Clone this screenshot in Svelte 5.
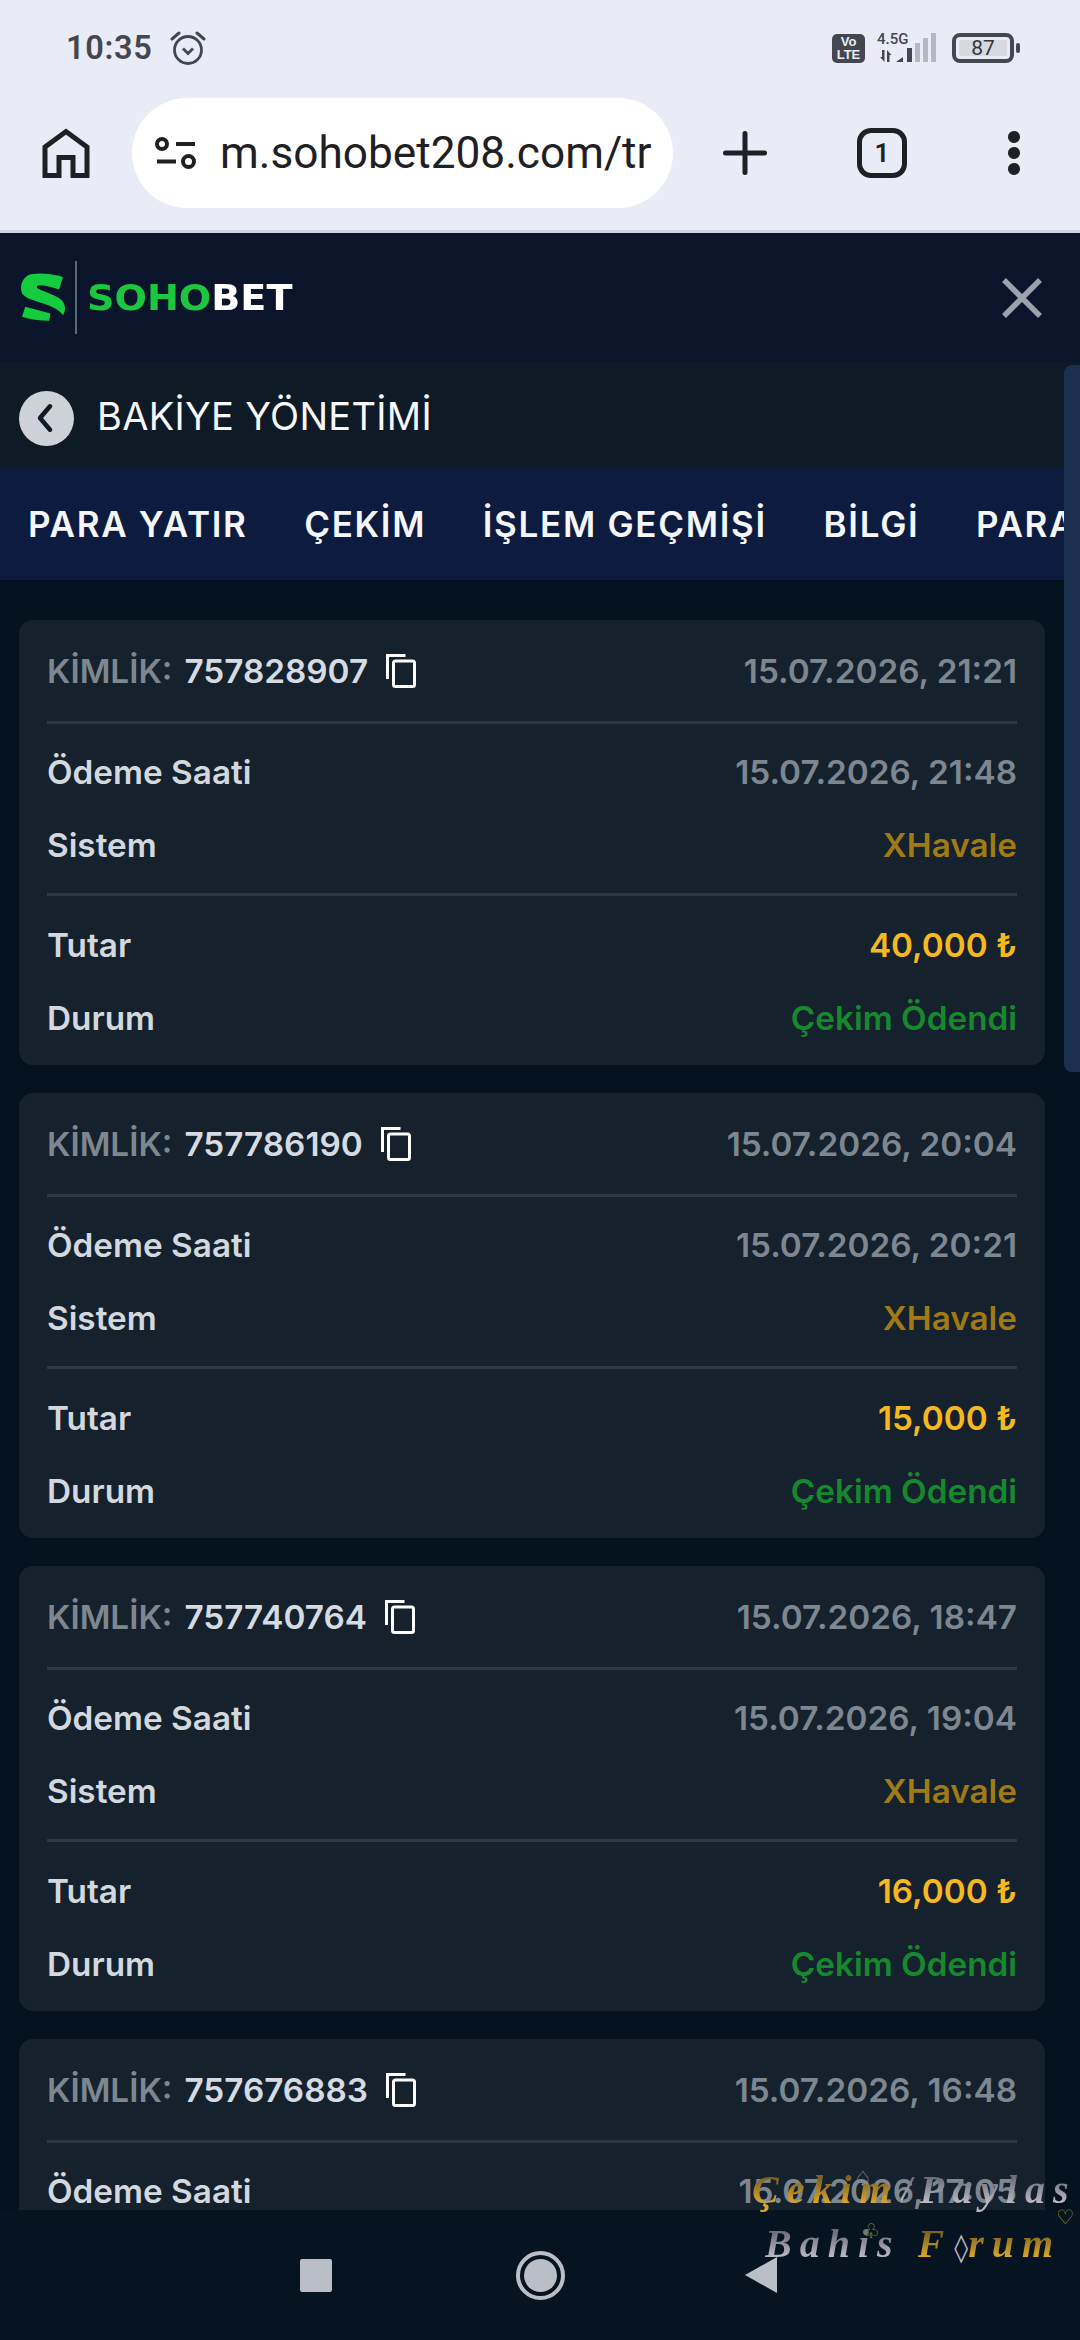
<script>
  const cards = [
    { id: '757828907', date: '15.07.2026, 21:21', pay: '15.07.2026, 21:48', amount: '40,000 ₺' },
    { id: '757786190', date: '15.07.2026, 20:04', pay: '15.07.2026, 20:21', amount: '15,000 ₺' },
    { id: '757740764', date: '15.07.2026, 18:47', pay: '15.07.2026, 19:04', amount: '16,000 ₺' },
    { id: '757676883', date: '15.07.2026, 16:48', pay: '15.07.2026, 17:05', amount: '' }
  ];
  const tabs = ['PARA YATIR', 'ÇEKİM', 'İŞLEM GEÇMİŞİ', 'BİLGİ', 'PARA'];
</script>

<div class="page">
  <div class="status">
    <div class="st-left">
      <span class="time">10:35</span>
      <svg class="alarm" viewBox="0 0 36 36" width="36" height="36" fill="none" stroke="#44474f" stroke-width="2.8">
        <circle cx="18" cy="20" r="13.500" />
        <path d="M13 18.500l5 5 5-5" />
        <path d="M2 9l7-6M34 9l-7-6" stroke-linecap="round" stroke-width="3" />
      </svg>
    </div>
    <div class="st-right">
      <div class="volte"><span>Vo</span><span>LTE</span></div>
      <div class="net">
        <div class="g">4.5G</div>
        <svg viewBox="0 0 60 30" width="60" height="30" class="bars">
          <path d="M5 17h2.500v12L3 24h2zM10 29V17l4.500 5h-2v7z" fill="#44474f" />
          <path d="M19 29l7-5v5z" fill="#44474f" />
          <rect x="30" y="15" width="5" height="14" fill="#44474f" />
          <rect x="38" y="10" width="5" height="19" fill="#b5b8c2" />
          <rect x="46" y="5" width="5" height="24" fill="#b5b8c2" />
          <rect x="54" y="0" width="5" height="29" fill="#b5b8c2" />
        </svg>
      </div>
      <div class="batt"><div class="batt-in">87</div></div>
      <div class="nub"></div>
    </div>
  </div>

  <div class="toolbar">
    <svg class="home" viewBox="0 0 48 50" width="48" height="50" fill="none" stroke="#1f2024" stroke-width="5">
      <path d="M3 47.500V19L24 3.500 45 19v28.500H31V29.500H17v18z" />
    </svg>
    <div class="url">
      <svg viewBox="0 0 42 32" width="42" height="32" fill="none" stroke="#1f2024" stroke-width="4">
        <circle cx="7" cy="7" r="5" />
        <path d="M21 7h19M2 24.500h19" />
        <circle cx="33.500" cy="24.500" r="5.500" />
      </svg>
      <span class="url-text">m.sohobet208.com/tr</span>
    </div>
    <svg class="plus" viewBox="0 0 44 44" width="44" height="44" stroke="#1f2024" stroke-width="5" stroke-linecap="round">
      <path d="M22 2.500v39M2.500 22h39" />
    </svg>
    <div class="tabcount">1</div>
    <div class="dots"><i></i><i></i><i></i></div>
  </div>
  <div class="sep"></div>

  <header class="head">
    <div class="logo">
      <svg viewBox="30 48 142 148" width="47" height="49" fill="#15cb3e">
        <path d="M62 52C90 46 130 50 160 60L148 98C125 90 105 85 90 85C82 85 78 90 84 95C100 104 130 112 150 125C165 136 172 155 160 176C150 160 130 150 100 140C75 132 50 125 38 112C28 98 32 62 62 52Z" />
        <path d="M46 150L122 170L118 192C90 192 60 188 36 180Z" />
      </svg>
      <div class="logo-div"></div>
      <div class="logo-text"><span class="soho">SOHO</span><span>BET</span></div>
    </div>
    <svg class="close" viewBox="0 0 40 40" width="40" height="40" stroke="#9ba1ad" stroke-width="5.500">
      <path d="M2 2l36 36M38 2L2 38" />
    </svg>
  </header>

  <div class="title">
    <div class="back">
      <svg viewBox="0 0 24 36" width="20" height="30" fill="none" stroke="#101a25" stroke-width="5.500" stroke-linecap="round" stroke-linejoin="round">
        <path d="M18 4L6 18l12 14" />
      </svg>
    </div>
    <span class="title-text">BAKİYE YÖNETİMİ</span>
  </div>

  <nav class="tabs">
    {#each tabs as t}<span class="tab">{t}</span>{/each}
  </nav>

  <main class="list">
    {#each cards as c}
      <section class="card">
        <div class="row top">
          <div class="idline">
            <span class="lbl-id">KİMLİK:</span>
            <span class="idv">{c.id}</span>
            <svg viewBox="0 0 30 34" width="30" height="34" fill="none" stroke="#fff" stroke-width="3">
              <path d="M1.500 25V1.500h18" />
              <rect x="7.500" y="7" width="21" height="25.500" rx="2" />
            </svg>
          </div>
          <span class="muted">{c.date}</span>
        </div>
        <hr />
        <div class="row"><span class="lbl">Ödeme Saati</span><span class="muted">{c.pay}</span></div>
        <div class="row"><span class="lbl">Sistem</span><span class="sys">XHavale</span></div>
        <hr />
        <div class="row"><span class="lbl">Tutar</span><span class="amt">{c.amount}</span></div>
        <div class="row"><span class="lbl">Durum</span><span class="ok">Çekim Ödendi</span></div>
      </section>
    {/each}
  </main>

  <footer class="nav">
    <div class="sq"></div>
    <div class="circ"><div></div></div>
    <svg viewBox="0 0 32 36" width="32" height="36"><path d="M32 0v36L0 18z" fill="#b9bec7" /></svg>
  </footer>

  <div class="scroll"></div>
  <div class="wm">
    <div class="wm1"><span class="au">Çekim</span><span class="ag">/Paylas</span></div>
    <div class="wm2"><span class="ag">Bahis</span> <span class="au">F</span><span class="dia">◊</span><span class="au">rum</span></div>
    <span class="suit spade">♤</span>
    <span class="suit club">♧</span>
    <span class="suit heart">♡</span>
  </div>
</div>

<style>
  :global(body) { margin: 0; background: #061320; }
  .page {
    position: relative; width: 1080px; height: 2340px; overflow: hidden;
    display: flex; flex-direction: column; font-family: Inter, "Noto Sans", sans-serif;
  }
  .status {
    height: 90px; flex: none; background: #e9ecf7; display: flex; justify-content: space-between;
    align-items: center; padding: 6px 60px 0 66px; box-sizing: border-box;
  }
  .st-left { display: flex; align-items: center; gap: 17px; }
  .time { font: 600 32.500px Roboto, sans-serif; color: #44474f; letter-spacing: .7px; }
  .st-right { display: flex; align-items: center; }
  .volte {
    width: 33px; height: 29px; background: #44474f; border-radius: 5px; color: #e9ecf7;
    font: 700 13px/13px "Liberation Sans", sans-serif; display: flex; flex-direction: column; align-items: center; justify-content: center;
  }
  .net { width: 60px; height: 30px; margin-left: 12px; position: relative; }
  .g { position: absolute; left: 0; top: -3px; font: 500 15px/18px Roboto, sans-serif; color: #44474f; }
  .bars { position: absolute; left: 0; top: 0; }
  .batt {
    width: 62px; height: 30px; box-sizing: border-box; border: 4px solid #44474f; border-radius: 8px;
    margin-left: 15px; padding: 3px 3px; display: flex;
  }
  .batt-in { flex: 1; background: #d6d9e0; border-radius: 2px; text-align: center; font: 400 21px/16px Roboto, sans-serif; color: #33353b; }
  .nub { width: 4px; height: 10px; background: #44474f; border-radius: 2px; margin-left: 2px; }

  .toolbar { height: 140px; flex: none; background: #e9ecf7; display: flex; align-items: center; padding-bottom: 14px; box-sizing: border-box; }
  .home { margin-left: 42px; flex: none; }
  .url {
    margin-left: 42px; width: 541px; height: 110px; background: #fff; border-radius: 55px;
    display: flex; align-items: center; gap: 23px; padding-left: 23px; box-sizing: border-box; overflow: hidden; flex: none;
  }
  .url svg { flex: none; }
  .url-text { font: 400 44.200px Roboto, sans-serif; color: #1f2024; white-space: nowrap; }
  .plus { margin-left: 50px; flex: none; }
  .tabcount {
    margin-left: 90px; width: 50px; height: 50px; box-sizing: border-box; border: 5px solid #1f2024; border-radius: 14px;
    font: 600 26px/40px Roboto, sans-serif; color: #1f2024; text-align: center; flex: none;
  }
  .dots { margin-left: 101px; display: flex; flex-direction: column; gap: 4.500px; flex: none; }
  .dots i { width: 11.500px; height: 11.500px; border-radius: 50%; background: #1f2024; display: block; }
  .sep { height: 3px; flex: none; background: #d0d4e0; }

  .head { height: 129px; flex: none; background: #0a142a; display: flex; align-items: center; justify-content: space-between; padding: 0 38px 0 20px; box-sizing: border-box; }
  .logo { display: flex; align-items: center; }
  .logo-div { width: 1.500px; height: 73px; background: #5d6779; margin-left: 8px; margin-right: 10px; }
  .logo-text { font: 700 35px "DejaVu Sans", sans-serif; color: #fff; transform: scaleX(1.09); transform-origin: left center; white-space: nowrap; }
  .soho { color: #1cc63f; }
  .close { flex: none; margin-top: 1px; }

  .title { height: 106px; flex: none; background: #0e1a26; display: flex; align-items: center; gap: 24px; padding: 6px 0 0 19px; color: #f6f8fa; font-size: 38px; font-weight: 400; letter-spacing: .3px; box-sizing: border-box; }
  .title-text { margin: -5px 0 0 -1px; }
  .back { width: 55px; height: 55px; border-radius: 50%; background: #ced2d8; display: flex; align-items: center; justify-content: center; flex: none; }
  .back svg { margin-left: -3px; }

  .tabs { height: 112px; flex: none; background: #0d1b3f; display: flex; align-items: center; gap: 56.500px; padding-left: 28px; overflow: hidden; white-space: nowrap; }
  .tab { color: #f4f6fa; font-size: 35px; font-weight: 600; letter-spacing: 1.700px; flex: none; }

  .list { flex: 1; min-height: 0; overflow: hidden; background: #04121f; padding: 40px 35px 0 19px; display: flex; flex-direction: column; gap: 28px; }
  .card { flex: none; background: #15212d; border-radius: 14px; padding: 0 28px; height: 445px; box-sizing: border-box; }
  .row { display: flex; justify-content: space-between; align-items: center; height: 73px; font-size: 33.300px; font-weight: 600; white-space: nowrap; }
  .row.top { height: 101px; }
  hr { margin: 12px 0; border: 0; height: 3px; background: #2c3741; }
  .row.top + hr { margin: 0 0 11px; }
  .idline { display: flex; align-items: center; }
  .lbl-id { color: #7d8790; }
  .idv { color: #d6dbe2; margin-left: 12px; }
  .idline svg { margin-left: 18px; }
  .lbl { color: #d3d8df; }
  .muted { color: #7d8790; }
  .sys { color: #a07a14; }
  .amt { color: #f5b81f; }
  .ok { color: #16892d; }

  .nav { height: 130px; flex: none; background: #061320; display: flex; align-items: center; padding-left: 300px; box-sizing: border-box; }
  .sq { width: 32px; height: 33px; background: #b9bec7; border-radius: 2px; }
  .circ { width: 49px; height: 49px; border: 4px solid #b9bec7; border-radius: 50%; margin-left: 184px; padding: 4px; box-sizing: border-box; flex: none; }
  .circ div { width: 100%; height: 100%; background: #b9bec7; border-radius: 50%; }
  .nav svg { margin-left: 180px; flex: none; }

  .scroll { position: absolute; right: 0; top: 365px; width: 16px; height: 707px; background: #1b2f4f; border-radius: 8px 0 0 8px; }
  .wm { position: absolute; left: 752px; top: 2163px; font: italic 700 40px/54px "Liberation Serif", serif; letter-spacing: 8px; white-space: nowrap; }
  .wm1 { height: 54px; }
  .wm2 { margin-left: 13px; word-spacing: -3px; }
  .au, .ag { -webkit-background-clip: text; background-clip: text; color: transparent; padding-right: 2px; }
  .au { background-image: linear-gradient(180deg, #7d6120 25%, #d9a72a 80%); }
  .ag { background-image: linear-gradient(180deg, #6e6f7a 25%, #b9bac6 80%); }
  .dia { color: #b9bac6; font: 400 28px/54px "DejaVu Sans", sans-serif; letter-spacing: 0; }
  .suit { position: absolute; font: 400 20px/24px "DejaVu Sans", sans-serif; letter-spacing: 0; }
  .spade { left: 102px; top: 3px; color: #8b95a0; }
  .club { left: 110px; top: 56px; color: #8f9a1e; }
  .heart { left: 304px; top: 42px; color: #8f9a1e; }
</style>
